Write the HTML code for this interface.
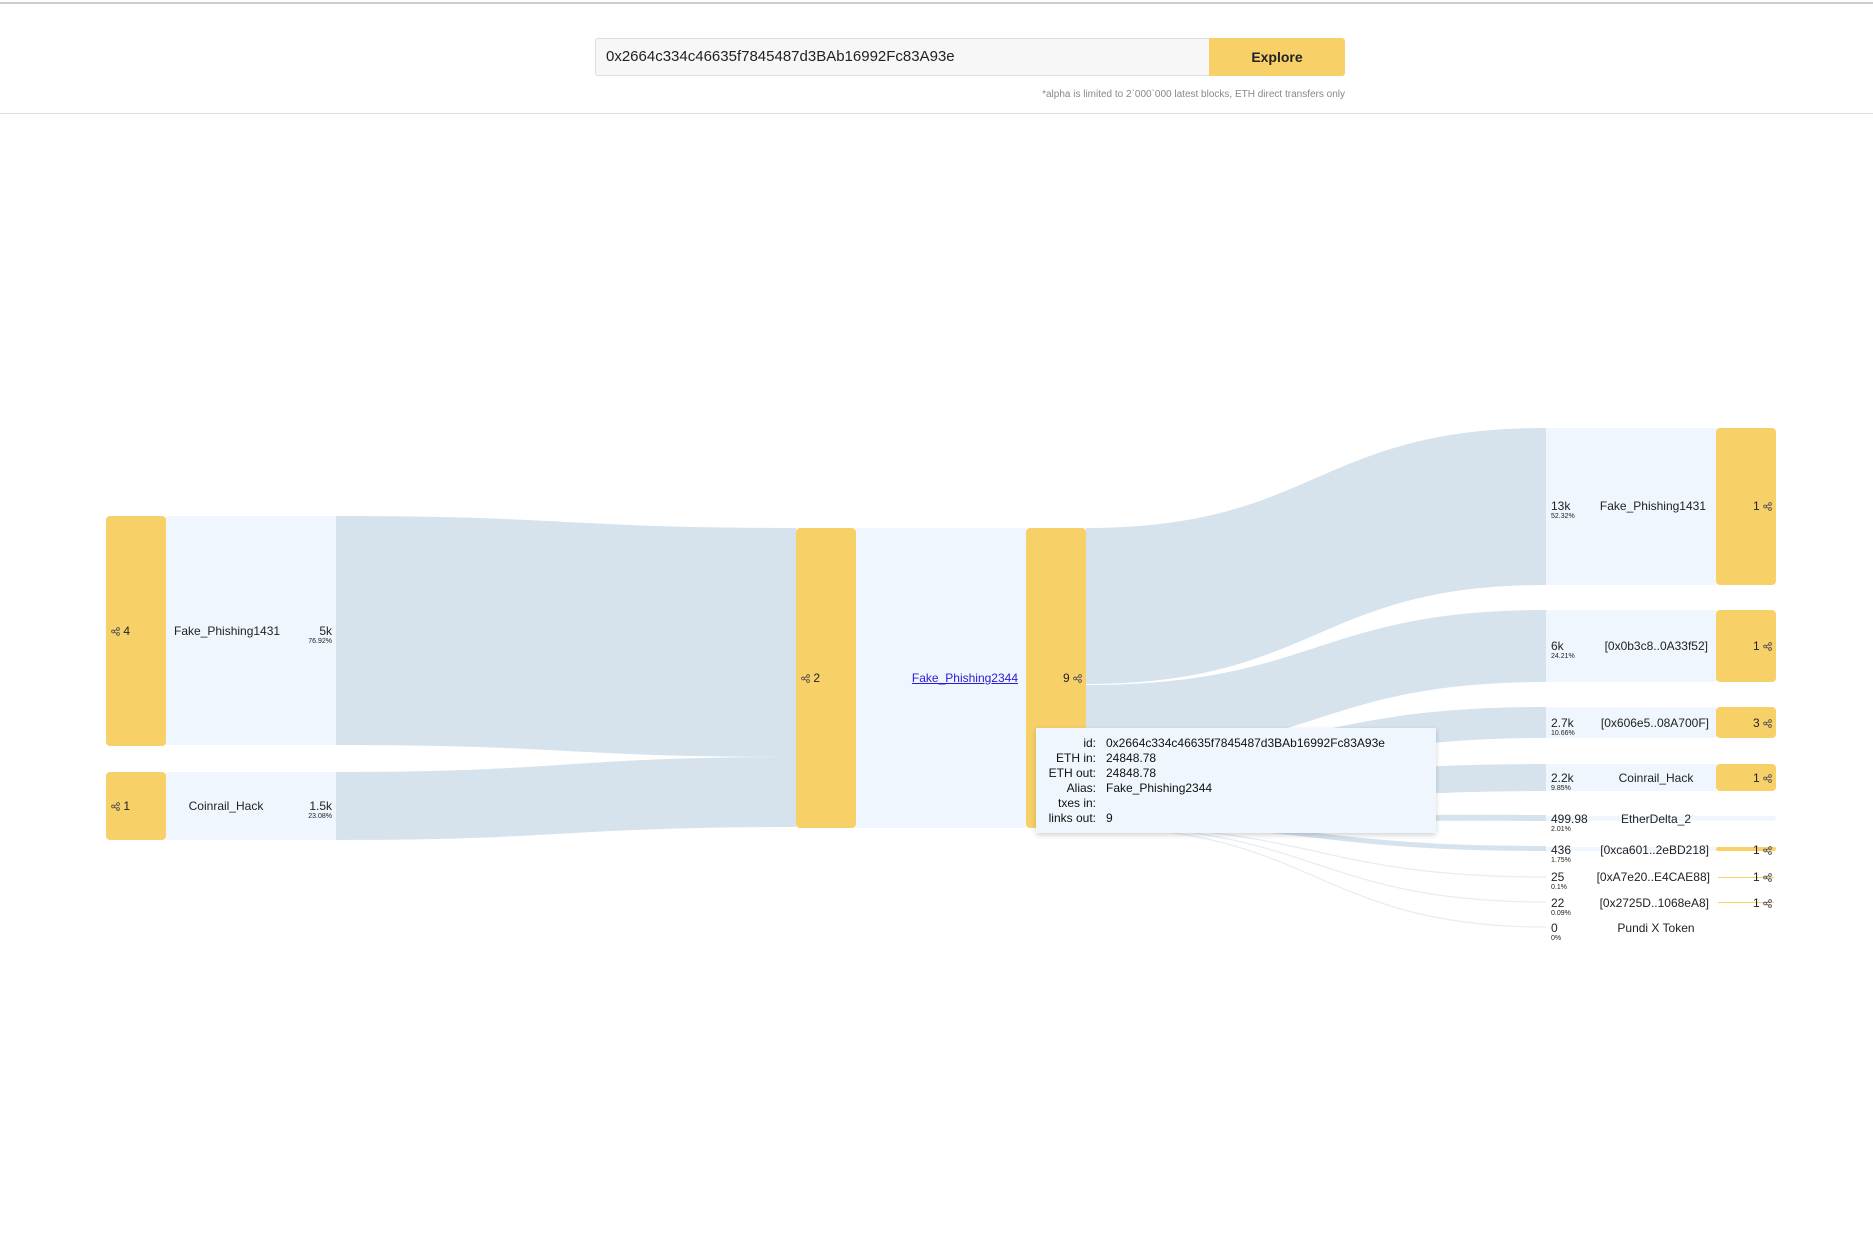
<!DOCTYPE html>
<html><head><meta charset="utf-8"><style>
*{margin:0;padding:0;box-sizing:border-box}
body{width:1873px;height:1240px;background:#fff;position:relative;overflow:hidden;font-family:"Liberation Sans",sans-serif;color:#222}
.a{position:absolute}
.y{position:absolute;background:#f7d068;border-radius:4px}
.l{position:absolute;background:#eff6fd}
.t{position:absolute;font-size:12px;line-height:14px;white-space:nowrap}
.p{font-size:7px;line-height:7px;display:block}
svg.i{width:9px;height:9px;vertical-align:-1px}
</style></head><body>
<div class="a" style="left:0;top:2px;width:1873px;height:2px;background:#ccc"></div>
<div class="a" style="left:595px;top:38px;width:615px;height:38px;background:#f7f7f7;border:1px solid #ddd;border-radius:3px 0 0 3px;font-size:15px;line-height:36px;padding-left:10px;color:#222">0x2664c334c46635f7845487d3BAb16992Fc83A93e</div>
<div class="a" style="left:1209px;top:38px;width:136px;height:38px;background:#f7d068;border-radius:0 3px 3px 0;font-size:14px;font-weight:bold;line-height:38px;text-align:center;color:#222">Explore</div>
<div class="a" style="right:528px;top:89px;font-size:10px;color:#888">*alpha is limited to 2`000`000 latest blocks, ETH direct transfers only</div>
<div class="a" style="left:0;top:113px;width:1873px;height:1px;background:#ddd"></div>

<svg class="a" style="left:0;top:0" width="1873" height="1240">
<g fill="#d6e2ec">
<path d="M336,516 C566,516 566,528 796,528 L796,757 C566,757 566,745 336,745Z"/>
<path d="M336,772 C566,772 566,757 796,757 L796,827 C566,827 566,840 336,840Z"/>
<path d="M1086,528 C1316,528 1316,428 1546,428 L1546,585 C1316,585 1316,684 1086,684Z"/>
<path d="M1086,685 C1316,685 1316,610 1546,610 L1546,682 C1316,682 1316,756 1086,756Z"/>
<path d="M1086,756 C1316,756 1316,707 1546,707 L1546,738 C1316,738 1316,787 1086,787Z"/>
<path d="M1086,787 C1316,787 1316,764 1546,764 L1546,791 C1316,791 1316,814 1086,814Z"/>
<path d="M1086,814 C1316,814 1316,815 1546,815 L1546,821 C1316,821 1316,820 1086,820Z"/>
<path d="M1086,820 C1316,820 1316,846 1546,846 L1546,851 C1316,851 1316,825 1086,825Z"/>
</g>
<g fill="none" stroke="#e6edf3" stroke-width="1.2">
<path d="M1086,826 C1316,826 1316,877 1546,877"/>
<path d="M1086,826 C1316,826 1316,902 1546,902"/>
<path d="M1086,827 C1316,827 1316,927 1546,927"/>
</g>
</svg>

<!-- left -->
<div class="y" style="left:106px;top:516px;width:60px;height:230px"></div>
<div class="l" style="left:166px;top:516px;width:170px;height:229px"></div>
<div class="y" style="left:106px;top:772px;width:60px;height:68px"></div>
<div class="l" style="left:166px;top:772px;width:170px;height:68px"></div>

<!-- center -->
<div class="y" style="left:796px;top:528px;width:60px;height:300px"></div>
<div class="l" style="left:856px;top:528px;width:170px;height:300px"></div>
<div class="y" style="left:1026px;top:528px;width:60px;height:300px"></div>

<!-- right -->
<div class="l" style="left:1546px;top:428px;width:170px;height:157px"></div>
<div class="y" style="left:1716px;top:428px;width:60px;height:157px"></div>
<div class="l" style="left:1546px;top:610px;width:170px;height:72px"></div>
<div class="y" style="left:1716px;top:610px;width:60px;height:72px"></div>
<div class="l" style="left:1546px;top:707px;width:170px;height:31px"></div>
<div class="y" style="left:1716px;top:707px;width:60px;height:31px"></div>
<div class="l" style="left:1546px;top:764px;width:170px;height:27px"></div>
<div class="y" style="left:1716px;top:764px;width:60px;height:27px"></div>
<div class="l" style="left:1546px;top:816px;width:230px;height:5px;border-radius:3px"></div>
<div class="l" style="left:1546px;top:847px;width:170px;height:4px"></div>
<div class="y" style="left:1716px;top:847px;width:60px;height:4px;border-radius:2px"></div>
<div class="a" style="left:1718px;top:877px;width:56px;height:1px;background:#f7d068"></div>
<div class="a" style="left:1718px;top:902px;width:56px;height:1px;background:#f7d068"></div>

<svg width="0" height="0" style="position:absolute"><defs><g id="sh" fill="none" stroke="#555" stroke-width="0.9"><circle cx="2" cy="4.5" r="1.4"/><circle cx="7" cy="2" r="1.4"/><circle cx="7" cy="7" r="1.4"/><path d="M3.2,3.9L5.8,2.6M3.2,5.1L5.8,6.4"/></g></defs></svg>

<div class="t" style="left:111px;top:624px">&#8203;<svg class="i"><use href="#sh"/></svg> 4</div>
<div class="t" style="left:174px;top:624px">Fake_Phishing1431</div>
<div class="t" style="left:300px;top:624px;width:32px;text-align:right">5k<span class="p">76.92%</span></div>
<div class="t" style="left:111px;top:799px"><svg class="i"><use href="#sh"/></svg> 1</div>
<div class="t" style="left:166px;top:799px;width:120px;text-align:center">Coinrail_Hack</div>
<div class="t" style="left:296px;top:799px;width:36px;text-align:right">1.5k<span class="p">23.08%</span></div>

<div class="t" style="left:801px;top:671px"><svg class="i"><use href="#sh"/></svg> 2</div>
<div class="t" style="left:856px;top:671px;width:162px;text-align:right;color:#2a1bd8;text-decoration:underline">Fake_Phishing2344</div>
<div class="t" style="left:1030px;top:671px;width:52px;text-align:right">9 <svg class="i"><use href="#sh"/></svg></div>

<div class="t" style="left:1551px;top:499px">13k<span class="p">52.32%</span></div>
<div class="t" style="left:1590px;top:499px;width:126px;text-align:right;padding-right:10px">Fake_Phishing1431</div>
<div class="t" style="left:1716px;top:499px;width:56px;text-align:right">1 <svg class="i"><use href="#sh"/></svg></div>

<div class="t" style="left:1551px;top:639px">6k<span class="p">24.21%</span></div>
<div class="t" style="left:1590px;top:639px;width:126px;text-align:right;padding-right:8px">[0x0b3c8..0A33f52]</div>
<div class="t" style="left:1716px;top:639px;width:56px;text-align:right">1 <svg class="i"><use href="#sh"/></svg></div>

<div class="t" style="left:1551px;top:716px">2.7k<span class="p">10.66%</span></div>
<div class="t" style="left:1590px;top:716px;width:126px;text-align:right;padding-right:7px">[0x606e5..08A700F]</div>
<div class="t" style="left:1716px;top:716px;width:56px;text-align:right">3 <svg class="i"><use href="#sh"/></svg></div>

<div class="t" style="left:1551px;top:771px">2.2k<span class="p">9.85%</span></div>
<div class="t" style="left:1596px;top:771px;width:120px;text-align:center">Coinrail_Hack</div>
<div class="t" style="left:1716px;top:771px;width:56px;text-align:right">1 <svg class="i"><use href="#sh"/></svg></div>

<div class="t" style="left:1551px;top:812px">499.98<span class="p">2.01%</span></div>
<div class="t" style="left:1596px;top:812px;width:120px;text-align:center">EtherDelta_2</div>

<div class="t" style="left:1551px;top:843px">436<span class="p">1.75%</span></div>
<div class="t" style="left:1590px;top:843px;width:126px;text-align:right;padding-right:7px">[0xca601..2eBD218]</div>
<div class="t" style="left:1716px;top:843px;width:56px;text-align:right">1 <svg class="i"><use href="#sh"/></svg></div>

<div class="t" style="left:1551px;top:870px">25<span class="p">0.1%</span></div>
<div class="t" style="left:1590px;top:870px;width:126px;text-align:right;padding-right:6px">[0xA7e20..E4CAE88]</div>
<div class="t" style="left:1716px;top:870px;width:56px;text-align:right">1 <svg class="i"><use href="#sh"/></svg></div>

<div class="t" style="left:1551px;top:896px">22<span class="p">0.09%</span></div>
<div class="t" style="left:1590px;top:896px;width:126px;text-align:right;padding-right:7px">[0x2725D..1068eA8]</div>
<div class="t" style="left:1716px;top:896px;width:56px;text-align:right">1 <svg class="i"><use href="#sh"/></svg></div>

<div class="t" style="left:1551px;top:921px">0<span class="p">0%</span></div>
<div class="t" style="left:1596px;top:921px;width:120px;text-align:center">Pundi X Token</div>

<!-- tooltip -->
<div class="a" style="left:1036px;top:728px;width:400px;height:105px;background:#eff6fd;box-shadow:0 2px 5px rgba(0,0,0,0.18)"></div>
<div class="t" style="left:1036px;top:736px;width:60px;text-align:right;line-height:15px;color:#111">id:<br>ETH in:<br>ETH out:<br>Alias:<br>txes in:<br>links out:</div>
<div class="t" style="left:1106px;top:736px;line-height:15px;color:#111">0x2664c334c46635f7845487d3BAb16992Fc83A93e<br>24848.78<br>24848.78<br>Fake_Phishing2344<br>&nbsp;<br>9</div>
</body></html>
